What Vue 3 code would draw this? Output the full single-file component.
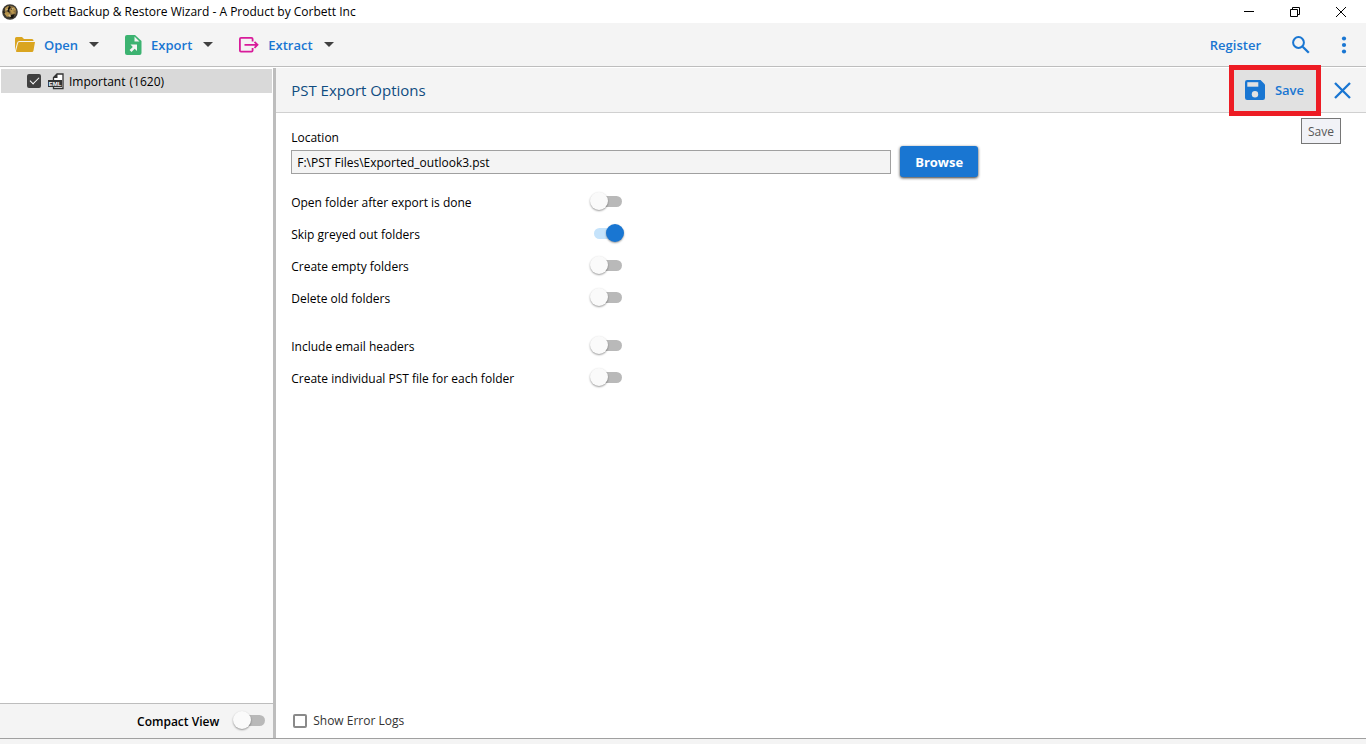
<script setup>
import { reactive, ref } from 'vue'

const menus = [
  { id: 'open', label: 'Open' },
  { id: 'export', label: 'Export' },
  { id: 'extract', label: 'Extract' },
]

const groups = reactive([
  [
    { id: 'open-folder', label: 'Open folder after export is done', on: false },
    { id: 'skip-greyed', label: 'Skip greyed out folders', on: true },
    { id: 'create-empty', label: 'Create empty folders', on: false },
    { id: 'delete-old', label: 'Delete old folders', on: false },
  ],
  [
    { id: 'headers', label: 'Include email headers', on: false },
    { id: 'individual', label: 'Create individual PST file for each folder', on: false },
  ],
])

const location = ref('F:\\PST Files\\Exported_outlook3.pst')
const important = ref(true)
const compact = ref(false)
const showLogs = ref(false)
</script>

<template>
  <div class="window">
    <header class="titlebar">
      <svg class="app-icon" viewBox="0 0 16 16" aria-hidden="true">
        <circle cx="8" cy="8" r="7.800" fill="#3d3a33" />
        <circle cx="8.500" cy="7.500" r="5.800" fill="#8a7040" />
        <path d="M3 4l3-2 2 1-2 2-3 2zM8 6l4-3 2 3-3 1 2 2-3 1zM2 9l4-1 2 3-3 2z" fill="#b8954c" />
        <path d="M7 2l2 1-2 3 1 3-3-2zM9 11l4-1-2 4-3 0zM1 7l2 1-1 2zM9 5l3 0-2 1z" fill="#17140e" />
        <path d="M4 5l2 0-1 2zM10 4l2 1-2 1zM6 12l2-2 1 3z" fill="#d8c48e" />
      </svg>
      <h1>Corbett Backup &amp; Restore Wizard - A Product by Corbett Inc</h1>
      <div class="window-buttons">
        <button type="button" aria-label="Minimize">
          <svg viewBox="0 0 12 12"><path d="M1 5.500h10" /></svg>
        </button>
        <button type="button" aria-label="Restore">
          <svg viewBox="0 0 12 12"><path d="M1.500 3.500h7v7h-7zM3.500 3.500v-2h7v7h-2" /></svg>
        </button>
        <button type="button" aria-label="Close">
          <svg viewBox="0 0 12 12"><path d="M1 1l10 10M11 1L1 11" /></svg>
        </button>
      </div>
    </header>

    <nav class="toolbar">
      <button v-for="m in menus" :key="m.id" type="button" class="menu">
        <svg v-if="m.id === 'open'" width="20" height="20" viewBox="0 0 20 20" aria-hidden="true">
          <path d="M0 15.500V3.500Q0 2 1.500 2H7l2 2h8q1.500 0 1.500 1.500V6H4.500Q2.500 6 2 8z" fill="#daa520" />
          <path d="M4.500 7H20l-1.500 8.500Q18.200 17 17 17H2Q.8 17 1 16L3 8.200Q3.300 7 4.500 7z" fill="#daa520" />
        </svg>
        <svg v-else-if="m.id === 'export'" width="17" height="20" viewBox="0 0 17 20" aria-hidden="true">
          <path d="M2 0h8l6.500 6v12q0 2-2 2H2q-2 0-2-2V2Q0 0 2 0z" fill="#3cb371" />
          <path d="M9.500 1.500V6.500h5zM5.500 9.500H12V16l-2.300-2.300L6.500 17 4.600 15.100l3.200-3.200z" fill="#f4f4f4" />
        </svg>
        <svg v-else width="20" height="16" viewBox="0 0 20 16" fill="none" stroke="#d81b9a" stroke-width="1.800" aria-hidden="true">
          <path d="M13.600 4.500V2q0-1.100-1.100-1.100H2Q.9.900.9 2v11.500q0 1.100 1.100 1.100h10.500q1.100 0 1.100-1.100V11M5.500 7.800H18M15.500 4.800l3 3-3 3" />
        </svg>
        <span>{{ m.label }}</span>
        <svg class="caret" width="10" height="5" viewBox="0 0 10 5" aria-hidden="true"><path d="M0 0h10L5 5z" fill="#404040" /></svg>
      </button>
      <div class="tools">
        <a href="#" class="register">Register</a>
        <button type="button" aria-label="Search">
          <svg width="18" height="18" viewBox="0 0 18 18" fill="none" stroke="#1976d2"><circle cx="6.500" cy="6.500" r="5.400" stroke-width="2" /><path d="M10.700 10.700l6.100 6.100" stroke-width="2.300" /></svg>
        </button>
        <button type="button" aria-label="More">
          <svg width="6" height="18" viewBox="0 0 6 18" fill="#1976d2"><circle cx="3" cy="2.500" r="2.100" /><circle cx="3" cy="9" r="2.100" /><circle cx="3" cy="15.500" r="2.100" /></svg>
        </button>
      </div>
    </nav>

    <main class="body">
      <aside class="sidebar">
        <label class="tree-row">
          <input v-model="important" class="box" type="checkbox" />
          <svg width="16" height="17" viewBox="0 0 16 17" aria-hidden="true">
            <path d="M5.500 15.500h9.500V1H9L5.500 4.500z" fill="#fff" stroke="#333" stroke-width="1.300" />
            <path d="M5 5L9.500.5V5z" fill="#333" />
            <path d="M0 7h14v7H0z" fill="#333" />
            <text x="7" y="12.500" text-anchor="middle" class="file-type">EML</text>
          </svg>
          <span>Important</span><span class="count">(1620)</span>
        </label>
        <div class="sidebar-foot">
          <label for="compact">Compact View</label>
          <input id="compact" v-model="compact" class="switch" type="checkbox" role="switch" />
        </div>
      </aside>

      <section class="panel">
        <header class="panel-head">
          <h2>PST Export Options</h2>
          <div class="save-wrap">
            <button type="button" class="save">
              <svg width="20" height="20" viewBox="0 0 20 20" aria-hidden="true">
                <path d="M2.200 0H15.500L20 4.500v13.300q0 2.200-2.200 2.200H2.200Q0 20 0 17.800V2.200Q0 0 2.200 0z" fill="#1976d2" />
                <path d="M2.300 2.200h11v4.500h-11z" fill="#e1e1e1" /><circle cx="10" cy="14.300" r="3.200" fill="#e1e1e1" />
              </svg>
              <span>Save</span>
            </button>
            <span class="tooltip" role="tooltip">Save</span>
          </div>
          <button type="button" aria-label="Close options">
            <svg width="17" height="17" viewBox="0 0 17 17" fill="none" stroke="#1976d2" stroke-width="2.300"><path d="M1 1l15 15M16 1L1 16" /></svg>
          </button>
        </header>

        <form class="options" @submit.prevent>
          <label class="location-label" for="location">Location</label>
          <div class="location-row">
            <input id="location" v-model="location" type="text" />
            <button type="button" class="browse">Browse</button>
          </div>
          <div v-for="(group, i) in groups" :key="i" class="group">
            <div v-for="o in group" :key="o.id" class="option">
              <label :for="o.id">{{ o.label }}</label>
              <input :id="o.id" v-model="o.on" class="switch" type="checkbox" role="switch" />
            </div>
          </div>
        </form>

        <label class="logs">
          <input v-model="showLogs" class="box" type="checkbox" />
          <span>Show Error Logs</span>
        </label>
      </section>
    </main>
    <footer class="statusbar"></footer>
  </div>
</template>

<style>
body {
  margin: 0;
}
</style>

<style scoped>
.window {
  display: flex;
  flex-direction: column;
  min-height: 100vh;
  background: #fff;
  color: #000;
  font: 12px/17px "Open Sans", "Noto Sans", sans-serif;
}
.window * {
  box-sizing: border-box;
}
button,
input {
  font: inherit;
  margin: 0;
}
button {
  display: flex;
  align-items: center;
  padding: 0;
  border: 0;
  background: none;
  color: #1976d2;
}
h1,
h2 {
  margin: 0;
  font-weight: 400;
}
svg {
  flex: none;
}
.titlebar {
  display: flex;
  align-items: center;
  height: 23px;
  padding-left: 2px;
}
.app-icon {
  width: 16px;
  height: 16px;
  margin-right: 5px;
}
h1 {
  font-size: 12px;
}
.window-buttons {
  display: flex;
  margin-left: auto;
  padding-right: 2px;
}
.window-buttons button {
  justify-content: center;
  width: 46px;
  height: 22px;
}
.window-buttons svg {
  width: 12px;
  height: 12px;
  fill: none;
  stroke: #000;
}
.toolbar {
  display: flex;
  align-items: center;
  height: 44px;
  padding: 0 19px 0 15px;
  border-bottom: 1px solid #bdbdbd;
  background: #f4f4f4;
  font-size: 13px;
  font-weight: 600;
  line-height: 18px;
}
.menu {
  gap: 9px;
  margin-right: 26px;
}
.menu .caret {
  margin-left: 2px;
}
.tools {
  display: flex;
  align-items: center;
  gap: 31px;
  margin-left: auto;
}
.register {
  color: #1976d2;
  text-decoration: none;
}
.body {
  display: flex;
  flex: 1;
  padding-top: 1px;
}
.sidebar {
  display: flex;
  flex-direction: column;
  width: 20%;
  padding-top: 1px;
}
.tree-row {
  display: flex;
  align-items: center;
  height: 24px;
  margin: 0 1px;
  padding-left: 26px;
  background: #d9d9d9;
}
.tree-row svg {
  margin: 0 5px 0 7px;
}
.file-type {
  fill: #fff;
  font: 700 6px "Liberation Sans", sans-serif;
}
.count {
  margin-left: 4px;
}
.box {
  flex: none;
  width: 14px;
  height: 14px;
  border: 2px solid #8a8a8a;
  border-radius: 2px;
  appearance: none;
  background: #fff;
}
.box:checked {
  display: grid;
  place-items: center;
  border-color: #404040;
  background: #404040;
}
.box:checked::after {
  content: "";
  width: 8px;
  height: 4px;
  margin-top: -3px;
  border: solid #fff;
  border-width: 0 0 1px 1px;
  transform: rotate(-45deg);
}
.sidebar-foot {
  display: flex;
  align-items: center;
  justify-content: flex-end;
  gap: 13px;
  height: 35px;
  margin-top: auto;
  padding-right: 5px;
  border-top: 1px solid #bdbdbd;
  background: #f4f4f4;
  font-weight: 600;
}
.switch {
  position: relative;
  flex: none;
  width: 36px;
  height: 20px;
  appearance: none;
}
.switch::before,
.switch::after {
  content: "";
  position: absolute;
}
.switch::before {
  top: 4px;
  left: 5px;
  width: 28px;
  height: 11px;
  border-radius: 6px;
  background: #b9b9b9;
}
.switch::after {
  top: 0;
  left: 1px;
  width: 18px;
  height: 18px;
  border-radius: 50%;
  background: #fafafa;
  box-shadow: 0 1px 2px rgba(0, 0, 0, 0.4);
}
.switch:checked::before {
  background: #c5e3fb;
}
.switch:checked::after {
  left: 17px;
  background: #1976d2;
}
.panel {
  display: flex;
  flex: 1;
  flex-direction: column;
  border-left: 3px solid #bdbdbd;
}
.panel-head {
  display: flex;
  align-items: center;
  height: 45px;
  padding: 0 15px;
  border-bottom: 1px solid #d0d0d0;
  background: #f4f4f4;
}
h2 {
  color: #0f4c81;
  font-size: 15px;
  line-height: 18px;
}
.save-wrap {
  position: relative;
  margin: 0 18px 0 auto;
}
.save {
  gap: 10px;
  height: 41px;
  padding: 0 12px 0 11px;
  outline: 5px solid #ed1c24;
  background: #e1e1e1;
  font-size: 13px;
  font-weight: 600;
}
.tooltip {
  position: absolute;
  top: 48px;
  right: -25px;
  padding: 4px 6px 3px;
  border: 1px solid #767676;
  background: #f1f2f7;
  color: #575757;
}
.options {
  padding: 16px 15px;
}
.location-label {
  display: block;
}
.location-row {
  display: flex;
  align-items: center;
  gap: 9px;
  margin-bottom: 9px;
}
.location-row input {
  flex: 0 1 600px;
  min-width: 0;
  height: 24px;
  padding: 1px 5px 0;
  border: 1px solid #a0a0a0;
  background: #f4f4f4;
  color: #000;
}
.browse {
  height: 31px;
  padding: 0 15px;
  border-radius: 3px;
  background: #1976d2;
  box-shadow: 0 1px 3px rgba(0, 0, 0, 0.8);
  color: #fff;
  font-size: 13px;
  font-weight: 700;
  line-height: 18px;
}
.group + .group {
  margin-top: 16px;
}
.option {
  display: flex;
  align-items: center;
  height: 32px;
}
.option label {
  flex: 0 1 298px;
}
.logs {
  display: flex;
  align-items: center;
  gap: 6px;
  margin: auto auto 9px 17px;
  color: #333;
}
.statusbar {
  height: 6px;
  border-top: 1px solid #a0a0a0;
  background: #f4f4f4;
}
</style>
